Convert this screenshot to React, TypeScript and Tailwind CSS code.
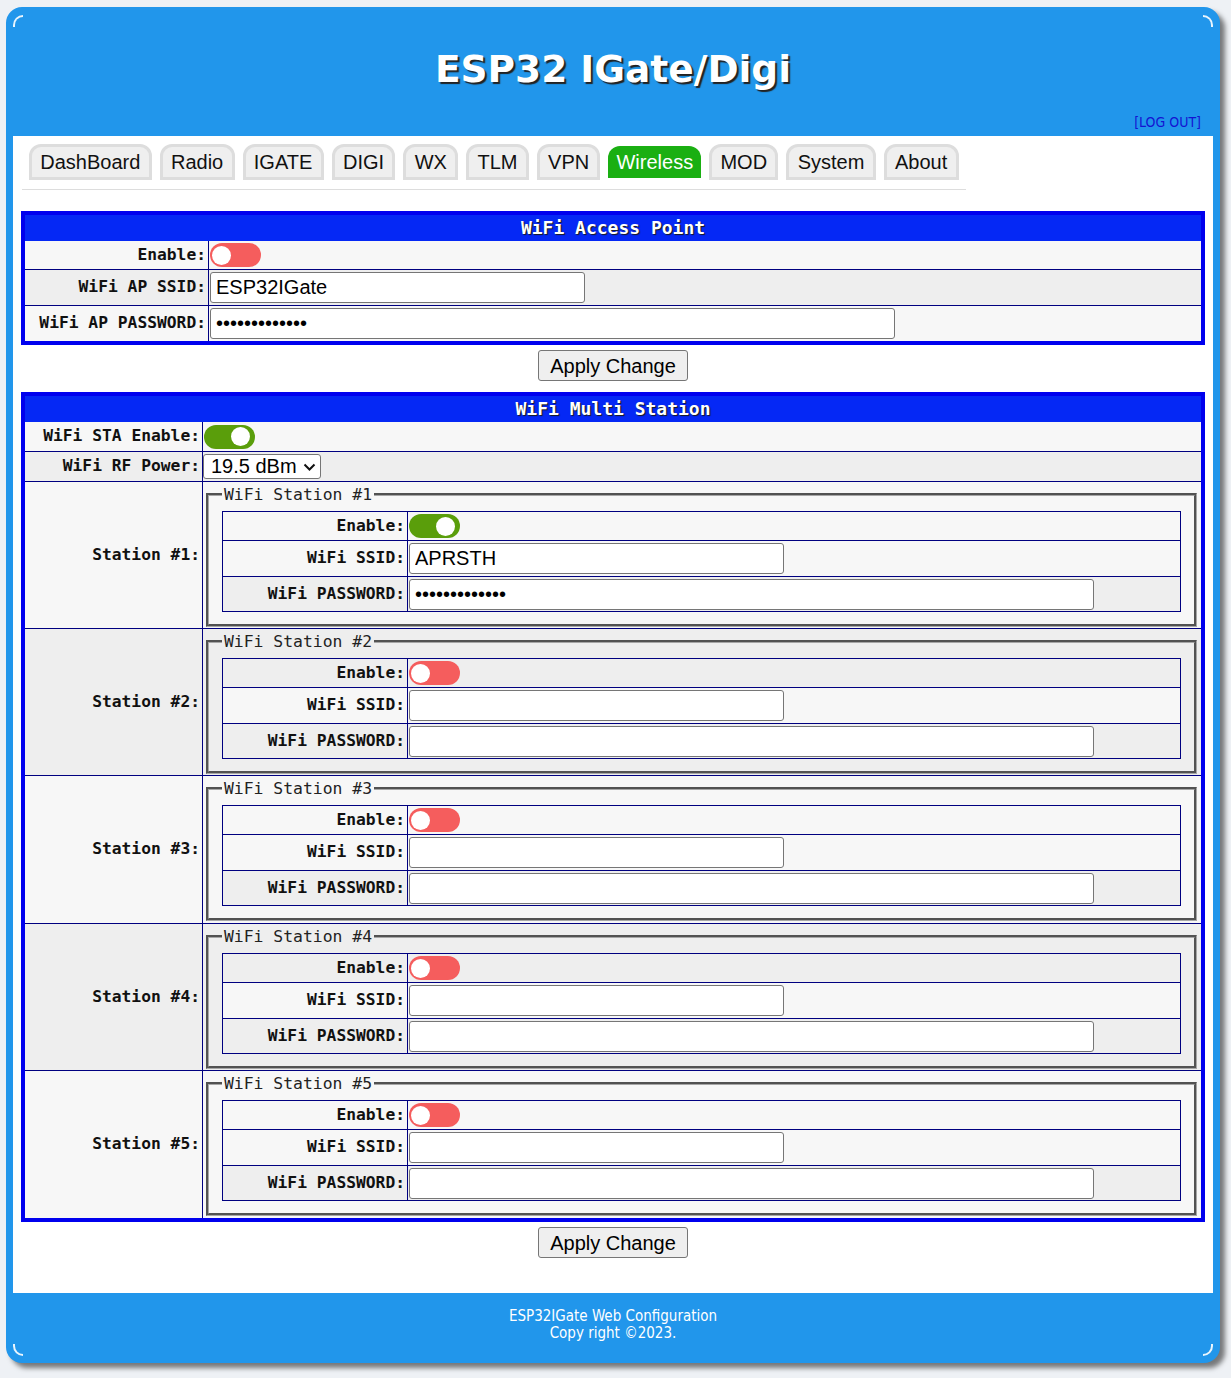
import React from "react";

const mono = "font-['DejaVu_Sans_Mono',monospace] font-bold text-[16.3px] text-[#111]";
const arial = "font-['Liberation_Sans',Arial,sans-serif]";
const condensed = "font-['DejaVu_Sans_Condensed','DejaVu_Sans',sans-serif] [font-stretch:condensed]";

const tabs = ["DashBoard", "Radio", "IGATE", "DIGI", "WX", "TLM", "VPN", "Wireless", "MOD", "System", "About"];

function Toggle({ on }: { on: boolean }) {
  return (
    <span
      className={
        on
          ? "ml-px flex h-[24px] w-[51px] items-center justify-end rounded-full bg-[#5a9e0b] pr-[5px]"
          : "ml-px flex h-[24px] w-[51px] items-center justify-start rounded-full bg-[#f55d5d] pl-[2px]"
      }
    >
      <span className="h-[19px] w-[19px] rounded-full bg-white" />
    </span>
  );
}

function TextInput({ value, width, password }: { value?: string; width: string; password?: boolean }) {
  return (
    <input
      type={password ? "password" : "text"}
      defaultValue={value}
      className={`ml-px h-[31px] ${width} rounded-[3px] border border-[#767676] bg-white pl-[5px] text-[20px] text-black outline-none ${arial}`}
    />
  );
}

function SectionHead({ title }: { title: string }) {
  return (
    <div className="h-[26px] bg-[#0528f5] text-center font-['DejaVu_Sans_Mono',monospace] text-[18px] font-bold leading-[26px] text-white [text-shadow:1px_1px_1px_#1a1a1a]">
      {title}
    </div>
  );
}

function ApplyButton() {
  return (
    <div className="flex justify-center">
      <button className={`h-[31px] w-[150px] rounded-[3px] border border-[#767676] bg-[#efefef] text-[20px] text-black ${arial}`}>
        Apply Change
      </button>
    </div>
  );
}

function Station({ n, on, ssid, pass, height, bg }: { n: number; on: boolean; ssid?: string; pass?: string; height: string; bg: string }) {
  return (
    <div className={`flex border-t border-[#000080] ${height} ${bg}`}>
      <div className={`flex w-[178px] shrink-0 items-center justify-end border-r border-[#000080] pr-[2px] ${mono}`}>
        Station #{n}:
      </div>
      <div className="flex-1">
        <fieldset className="ml-[3px] mr-[4px] mt-[3px] border-[3px] border-[#a6a6a6] px-[13px] pb-[12px] pt-[7px] [border-style:groove]">
          <legend className="px-[2px] font-['DejaVu_Sans_Mono',monospace] text-[16.4px] leading-[19px] text-[#222]">
            WiFi Station #{n}
          </legend>
          <div className="border border-[#000080]">
            <div className="flex h-[28px]">
              <div className={`flex w-[185px] shrink-0 items-center justify-end border-r border-[#000080] pr-[2px] ${mono}`}>Enable:</div>
              <div className="flex flex-1 items-center">
                <Toggle on={on} />
              </div>
            </div>
            <div className="flex h-[36px] border-t border-[#000080] bg-[#f7f7f7]">
              <div className={`flex w-[185px] shrink-0 items-center justify-end border-r border-[#000080] pr-[2px] ${mono}`}>WiFi SSID:</div>
              <div className="flex flex-1 items-center">
                <TextInput value={ssid} width="w-[375px]" />
              </div>
            </div>
            <div className="flex h-[35px] border-t border-[#000080] bg-[#eeeeee]">
              <div className={`flex w-[185px] shrink-0 items-center justify-end border-r border-[#000080] pr-[2px] ${mono}`}>WiFi PASSWORD:</div>
              <div className="flex flex-1 items-center">
                <TextInput value={pass} width="w-[685px]" password />
              </div>
            </div>
          </div>
        </fieldset>
      </div>
    </div>
  );
}

export default function App() {
  return (
    <div className="min-h-screen bg-[#eef1f5] pb-[15px] pl-[6px] pr-[11px] pt-[7px]">
      <div className="relative rounded-[16px] bg-[#2196eb] px-[7px] shadow-[5px_5px_5px_rgba(0,0,0,0.5)]">
        <span className="absolute left-[7px] top-[8px] h-[12px] w-[10px] rounded-tl-[12px] border-l-2 border-t-2 border-white/90" />
        <span className="absolute right-[7px] top-[8px] h-[12px] w-[10px] rounded-tr-[12px] border-r-2 border-t-2 border-white/90" />
        <span className="absolute bottom-[7px] left-[7px] h-[12px] w-[10px] rounded-bl-[12px] border-b-2 border-l-2 border-white/90" />
        <span className="absolute bottom-[7px] right-[7px] h-[12px] w-[10px] rounded-br-[12px] border-b-2 border-r-2 border-white/90" />

        <header className="flex h-[129px] flex-col">
          <h1 className="pt-[40px] text-center font-['DejaVu_Sans',Verdana,sans-serif] text-[37.5px] font-bold leading-[44px] text-white [text-shadow:2px_2px_1px_#222]">
            ESP32 IGate/Digi
          </h1>
          <div className={`mt-auto pb-[6px] pr-[12px] text-right text-[14px] leading-[16px] text-[#1414d2] ${condensed}`}>
            [LOG OUT]
          </div>
        </header>

        <main className="bg-white pb-[35px]">
          <div className="flex pl-[9px] pt-[8px]">
            <nav className="flex gap-2 border-b border-[#dddddd] pb-[9px] pl-[7px] pr-[7px]">
              {tabs.map((t) =>
                t === "Wireless" ? (
                  <span
                    key={t}
                    className={`self-center rounded-t-xl bg-[#1aaf12] px-2 py-[4px] text-[20px] leading-[24px] text-white ${arial}`}
                  >
                    {t}
                  </span>
                ) : (
                  <span
                    key={t}
                    className={`rounded-t-xl border-[3px] border-[#dddddd] bg-[#efefef] px-[8.3px] py-[3px] text-[20px] leading-[24px] text-[#111] ${arial}`}
                  >
                    {t}
                  </span>
                )
              )}
            </nav>
          </div>

          <section className="mx-2 mt-[21px] border-4 border-[#0000ee]">
            <SectionHead title="WiFi Access Point" />
            <div className="flex h-[28px] bg-[#f7f7f7]">
              <div className={`flex w-[184px] shrink-0 items-center justify-end border-r border-[#000080] pr-[2px] ${mono}`}>Enable:</div>
              <div className="flex flex-1 items-center">
                <Toggle on={false} />
              </div>
            </div>
            <div className="flex h-[36px] border-t border-[#000080] bg-[#eeeeee]">
              <div className={`flex w-[184px] shrink-0 items-center justify-end border-r border-[#000080] pr-[2px] ${mono}`}>WiFi AP SSID:</div>
              <div className="flex flex-1 items-center">
                <TextInput value="ESP32IGate" width="w-[375px]" />
              </div>
            </div>
            <div className="flex h-[36px] border-t border-[#000080] bg-[#f7f7f7]">
              <div className={`flex w-[184px] shrink-0 items-center justify-end border-r border-[#000080] pr-[2px] ${mono}`}>WiFi AP PASSWORD:</div>
              <div className="flex flex-1 items-center">
                <TextInput value="aprsthnetwork" width="w-[685px]" password />
              </div>
            </div>
          </section>

          <div className="mt-[5px]">
            <ApplyButton />
          </div>

          <section className="mx-2 mt-[11px] border-4 border-[#0000ee]">
            <SectionHead title="WiFi Multi Station" />
            <div className="flex h-[29px] bg-[#f7f7f7]">
              <div className={`flex w-[178px] shrink-0 items-center justify-end border-r border-[#000080] pr-[2px] ${mono}`}>WiFi STA Enable:</div>
              <div className="flex flex-1 items-center">
                <Toggle on />
              </div>
            </div>
            <div className="flex h-[30px] border-t border-[#000080] bg-[#eeeeee]">
              <div className={`flex w-[178px] shrink-0 items-center justify-end border-r border-[#000080] pr-[2px] ${mono}`}>WiFi RF Power:</div>
              <div className="flex flex-1 items-center">
                <div className="relative">
                  <select
                    defaultValue="19.5"
                    className={`h-[25px] w-[118px] appearance-none rounded-[3px] border border-[#767676] bg-white pl-[7px] pr-[24px] text-[20px] leading-[23px] text-black ${arial}`}
                  >
                    <option value="19.5">19.5 dBm</option>
                  </select>
                  <svg
                    className="pointer-events-none absolute right-[5px] top-[9px] h-[8px] w-[13px]"
                    viewBox="0 0 13 8"
                    fill="none"
                    stroke="#111"
                    strokeWidth="2"
                  >
                    <path d="M1.5 1.5 L6.5 6.5 L11.5 1.5" />
                  </svg>
                </div>
              </div>
            </div>
            <Station n={1} on ssid="APRSTH" pass="aprsthnetwork" height="h-[147px]" bg="bg-[#f7f7f7]" />
            <Station n={2} on={false} height="h-[147px]" bg="bg-[#eeeeee]" />
            <Station n={3} on={false} height="h-[148px]" bg="bg-[#f7f7f7]" />
            <Station n={4} on={false} height="h-[147px]" bg="bg-[#eeeeee]" />
            <Station n={5} on={false} height="h-[148px]" bg="bg-[#f7f7f7]" />
          </section>

          <div className="mt-[5px]">
            <ApplyButton />
          </div>
        </main>

        <footer className={`h-[70px] pt-[15px] text-center text-[15px] leading-[17px] text-white ${condensed}`}>
          <div>ESP32IGate Web Configuration</div>
          <div>Copy right ©2023.</div>
        </footer>
      </div>
    </div>
  );
}
